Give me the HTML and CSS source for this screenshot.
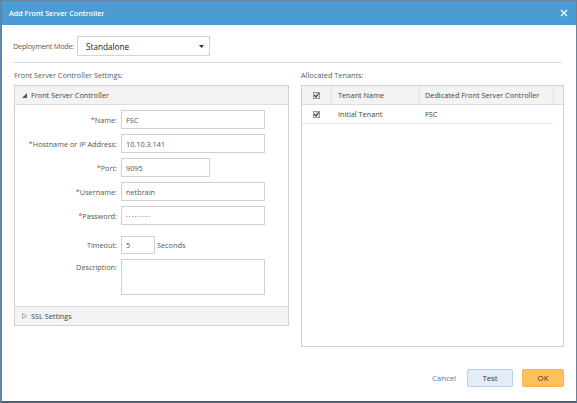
FILE: index.html
```html
<!DOCTYPE html>
<html lang="en">
<head>
	<meta charset="UTF-8">
	<title>Add Front Server Controller</title>
	<link rel="stylesheet" href="styles.css">
</head>
<body>
	<div class="dialog">
		<div class="titlebar">
			<span class="title">Add Front Server Controller</span>
			<span class="close">
				<svg width="8" height="8" viewBox="0 0 8 8"><path d="M1 1L7 7M7 1L1 7" stroke="#fff" stroke-width="1.2"/></svg>
			</span>
		</div>

		<div class="content">
			<div class="mode-row">
				<span class="label">Deployment Mode:</span>
				<div class="select">
					<span>Standalone</span>
					<svg width="5" height="3" viewBox="0 0 5 3"><path d="M0 0H5L2.5 3Z" fill="#333"/></svg>
				</div>
			</div>
			<div class="divider"></div>

			<div class="columns">
				<!-- 左侧：设置 -->
				<div class="col-left">
					<div class="section-label">Front Server Controller Settings:</div>
					<div class="panel">
						<div class="panel-head">
							<svg width="5" height="5" viewBox="0 0 5 5"><path d="M5 0V5H0Z" fill="#555"/></svg>
							<span>Front Server Controller</span>
						</div>
						<div class="form">
							<div class="row">
								<label><b>*</b>Name:</label>
								<div class="input">FSC</div>
							</div>
							<div class="row">
								<label><b>*</b>Hostname or IP Address:</label>
								<div class="input">10.10.3.141</div>
							</div>
							<div class="row">
								<label><b>*</b>Port:</label>
								<div class="input short">9095</div>
							</div>
							<div class="row">
								<label><b>*</b>Username:</label>
								<div class="input">netbrain</div>
							</div>
							<div class="row">
								<label><b>*</b>Password:</label>
								<div class="input pwd">.........</div>
							</div>
							<div class="row row-timeout">
								<label>Timeout:</label>
								<div class="input tiny">5</div>
								<span class="unit">Seconds</span>
							</div>
							<div class="row row-desc">
								<label>Description:</label>
								<div class="input area"></div>
							</div>
						</div>
						<div class="panel-foot">
							<svg width="5" height="6" viewBox="0 0 5 6"><path d="M0.5 0.5L4.5 3L0.5 5.5Z" fill="none" stroke="#999" stroke-width="0.8"/></svg>
							<span>SSL Settings</span>
						</div>
					</div>
				</div>

				<!-- 右侧：租户 -->
				<div class="col-right">
					<div class="section-label">Allocated Tenants:</div>
					<div class="grid">
						<div class="grid-head">
							<div class="c-chk"><span class="chk"></span></div>
							<div class="c-name">Tenant Name</div>
							<div class="c-fsc">Dedicated Front Server Controller</div>
							<div class="c-pad"></div>
						</div>
						<div class="grid-row">
							<div class="c-chk"><span class="chk"></span></div>
							<div class="c-name">Initial Tenant</div>
							<div class="c-fsc">FSC</div>
						</div>
					</div>
				</div>
			</div>
		</div>

		<div class="footer">
			<a class="cancel">Cancel</a>
			<span class="btn btn-test">Test</span>
			<span class="btn btn-ok">OK</span>
		</div>
	</div>
</body>
</html>
```

FILE: styles.css
```css
*{margin: 0;padding: 0;box-sizing: border-box;}
body {
	font-family: "Open Sans", "Liberation Sans", sans-serif;
	font-size: 7.3px;
	color: #4a4a4a;
	background: #fff;
}
.dialog {
	width: 577px;
	height: 403px;
	border: 1px solid #6b8198;
	border-left: 2px solid #5e86ad;
	border-bottom: 2px solid #4d6478;
	display: flex;
	flex-direction: column;
}
.titlebar {
	height: 24px;
	background: #4b9cd3;
	color: #fff;
	display: flex;
	align-items: center;
	justify-content: space-between;
	padding: 0 8px 0 7px;
}
.title {
	font-size: 7.2px;
	font-weight: 600;
}
.close {
	display: flex;
}
.content {
	flex: 1;
	padding: 11px 12px 0 11px;
}
.mode-row {
	display: flex;
	align-items: center;
	gap: 3px;
	height: 20px;
}
.label {
	color: #5a5a5a;
	letter-spacing: -0.25px;
}
.select {
	width: 133px;
	height: 20px;
	border: 1px solid #d4d4d4;
	display: flex;
	align-items: center;
	justify-content: space-between;
	padding: 0 5px 0 8px;
	font-size: 8.2px;
	color: #222;
}
.divider {
	border-top: 1px solid #dcdcdc;
	margin-top: 6px;
	margin-right: 2px;
}
.columns {
	display: flex;
	gap: 12px;
}
.section-label {
	height: 22px;
	line-height: 22px;
	color: #5a5a5a;
	padding-top: 1px;
}
.col-left {
	width: 276px;
	padding-left: 1px;
}
.col-right {
	width: 263px;
}
.panel {
	border: 1px solid #d0d0d0;
	height: 241px;
	display: flex;
	flex-direction: column;
}
.panel-head, .panel-foot {
	height: 19px;
	background: #f3f3f3;
	display: flex;
	align-items: center;
	gap: 4px;
	padding-left: 7px;
	color: #444;
}
.panel-head {
	border-bottom: 1px solid #dedede;
}
.panel-foot {
	border-top: 1px solid #dedede;
	margin-top: auto;
}
.form {
	padding-top: 5px;
	display: flex;
	flex-direction: column;
	gap: 5px;
}
.row {
	display: flex;
	align-items: center;
	gap: 4px;
}
.row label {
	width: 102px;
	text-align: right;
	color: #555;
}
.row label b {
	color: #e0393e;
	font-weight: normal;
}
.input {
	width: 144px;
	height: 19px;
	border: 1px solid #d0d0d0;
	display: flex;
	align-items: center;
	padding-left: 4px;
	color: #555;
}
.input.short {
	width: 89px;
}
.input.tiny {
	width: 34px;
	height: 18px;
}
.input.pwd {
	letter-spacing: 0.9px;
	padding-bottom: 3px;
}
.row-timeout {
	margin-top: 6px;
}
.unit {
	margin-left: -2px;
	color: #555;
}
.row-desc {
	align-items: flex-start;
}
.row-desc label {
	padding-top: 3px;
}
.input.area {
	height: 36px;
}
.grid {
	border: 1px solid #d0d0d0;
	height: 262px;
}
.grid-head, .grid-row {
	display: flex;
	height: 19px;
}
.grid-head {
	background: #f3f3f3;
	border-bottom: 1px solid #dedede;
}
.grid-row {
	width: 251px;
	border-bottom: 1px solid #e6e6e6;
}
.grid-head > div, .grid-row > div {
	display: flex;
	align-items: center;
	color: #444;
}
.c-chk {
	width: 29px;
	justify-content: center;
}
.c-name {
	width: 88px;
	padding-left: 6px;
	border-left: 1px solid #e2e2e2;
}
.c-fsc {
	width: 134px;
	padding-left: 5px;
	border-left: 1px solid #e2e2e2;
}
.grid-row .c-name, .grid-row .c-fsc {
	border-left-color: transparent;
}
.c-pad {
	flex: 1;
	border-left: 1px solid #e2e2e2;
}
.chk {
	width: 7px;
	height: 7px;
	border: 1px solid #999;
	background: #ddd;
	position: relative;
}
.chk::after {
	content: "";
	position: absolute;
	left: 1px;
	top: -1px;
	width: 2px;
	height: 4px;
	border: solid #333;
	border-width: 0 1px 1px 0;
	transform: rotate(40deg);
}
.footer {
	height: 48px;
	display: flex;
	align-items: flex-end;
	justify-content: flex-end;
	gap: 9px;
	padding: 0 12px 14px 0;
}
.cancel {
	height: 18px;
	display: flex;
	align-items: center;
	color: #3d86c6;
	font-size: 7.8px;
	margin-right: 2px;
}
.btn {
	height: 18px;
	display: flex;
	align-items: center;
	justify-content: center;
	border-radius: 2px;
	color: #333;
	font-size: 7.8px;
}
.btn-test {
	width: 46px;
	background: #e3ecf8;
	border: 1px solid #b8cde6;
}
.btn-ok {
	width: 42px;
	background: #fdc15b;
	border: 1px solid #f4b44a;
}
```
